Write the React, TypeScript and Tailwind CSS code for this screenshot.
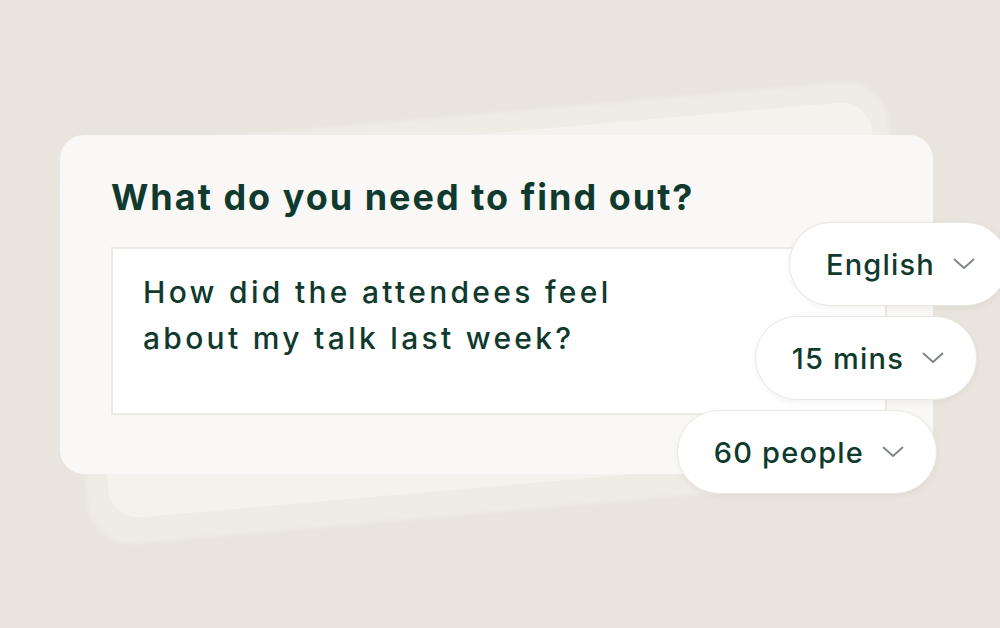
const pills = [
  { label: "English", shift: "mr-0" },
  { label: "15 mins", shift: "mr-[31px]" },
  { label: "60 people", shift: "mr-[71px]" },
];

function Chevron() {
  return (
    <svg width="22" height="12" viewBox="0 0 22 12" fill="none" className="shrink-0">
      <path d="M1.5 1.5 L11 10 L20.5 1.5" stroke="#7c8480" strokeWidth="1.8" strokeLinecap="round" strokeLinejoin="round" />
    </svg>
  );
}

function Pill({ label, shift }: { label: string; shift: string }) {
  return (
    <div
      className={`${shift} h-[84px] flex items-center gap-[18px] pl-[36px] pr-[32px] rounded-full bg-white border border-[#ebe8e2] shadow-[0_2px_6px_rgba(60,50,30,0.06)]`}
    >
      <span className="text-[29px] font-medium text-[#0f3a2d] leading-none tracking-[1.2px]">{label}</span>
      <Chevron />
    </div>
  );
}

export default function App() {
  return (
    <div
      className="relative w-[1000px] h-[628px] overflow-hidden bg-[#e9e4dd] pt-[135px] pl-[60px]"
      style={{ fontFamily: "Inter, 'Noto Sans', sans-serif" }}
    >
      {/* Back halo card */}
      <div
        aria-hidden="true"
        className="absolute left-[72px] top-[114px] w-[832px] h-[398px] rounded-[44px] bg-[#efebe5] -rotate-5 blur-[2px]"
      />
      {/* Middle card */}
      <div
        aria-hidden="true"
        className="absolute left-[94px] top-[134px] w-[792px] h-[352px] rounded-[30px] bg-[#f4f2ed] -rotate-5"
      />

      {/* Main card */}
      <div className="relative w-[873px] h-[339px] rounded-[24px] bg-[#f9f8f6] pl-[51px] pt-[40px]">
        <h1 className="text-[36px] font-bold text-[#0f3a2d] leading-[44px] tracking-[2px]">
          What do you need to find out?
        </h1>
        <div className="mt-[28px] w-[776px] h-[168px] bg-white border-2 border-[#ebe9e4] pl-[30px] pt-[20px]">
          <p className="text-[30px] font-medium text-[#0f3a2d] leading-[46px] tracking-[3.3px]">
            How did the attendees feel
            <br />
            about my talk last week?
          </p>
        </div>
      </div>

      {/* Option pills */}
      <div className="absolute top-[222px] right-[-8px] flex flex-col items-end gap-[10px]">
        {pills.map((p) => (
          <Pill key={p.label} label={p.label} shift={p.shift} />
        ))}
      </div>
    </div>
  );
}
